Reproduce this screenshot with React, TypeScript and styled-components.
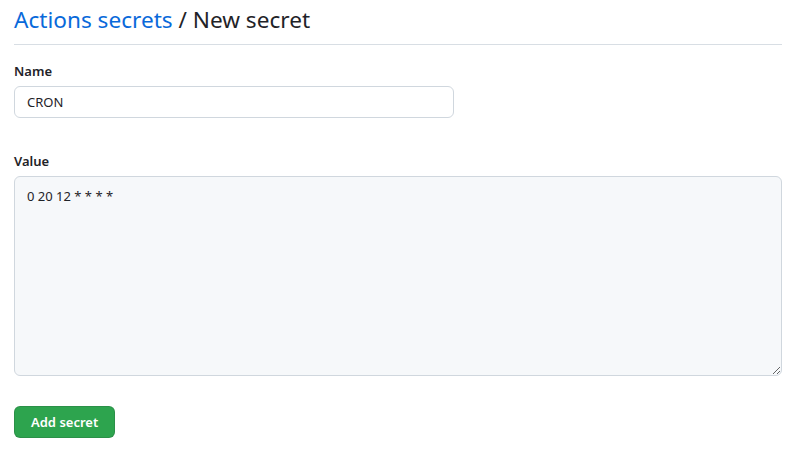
import styled, { createGlobalStyle } from "styled-components";

const GlobalStyle = createGlobalStyle`
  body {
    margin: 0;
    background: #ffffff;
    font-family: "Noto Sans", "Open Sans", sans-serif;
    color: #1f2328;
  }
`;

const Page = styled.div`
  width: 768px;
  padding: 0 14px;
`;

const Header = styled.h2`
  margin: 0;
  padding-top: 2px;
  padding-bottom: 6px;
  border-bottom: 1px solid #d8dee4;
  font-size: 22.6px;
  font-weight: 400;
  line-height: 36px;
  color: #1f2328;
`;

const Crumb = styled.a`
  color: #0969da;
  text-decoration: none;
`;

const Form = styled.form`
  display: flex;
  flex-direction: column;
  padding-top: 16px;
`;

const Field = styled.div<{ $gap?: number }>`
  display: flex;
  flex-direction: column;
  gap: 4px;
  margin-bottom: ${(p) => p.$gap ?? 0}px;
`;

const Label = styled.label`
  font-size: 13px;
  font-weight: 600;
  line-height: 21px;
  color: #1f2328;
`;

const baseField = `
  box-sizing: border-box;
  border: 1px solid #d0d7de;
  border-radius: 6px;
  font-family: "Noto Sans", "Open Sans", sans-serif;
  font-size: 13px;
  color: #1f2328;
  padding: 5px 12px;
  outline: none;
`;

const TextInput = styled.input`
  ${baseField}
  width: 440px;
  height: 32px;
  background: #ffffff;
`;

const TextArea = styled.textarea`
  ${baseField}
  width: 768px;
  height: 200px;
  padding: 9px 12px;
  line-height: 20px;
  background: #f6f8fa;
  resize: vertical;
`;

const Actions = styled.div`
  display: flex;
`;

const SubmitButton = styled.button`
  height: 32px;
  padding: 0 16px;
  border: 1px solid rgba(31, 35, 40, 0.15);
  border-radius: 6px;
  background: #2da44e;
  color: #ffffff;
  font-family: "Noto Sans", "Open Sans", sans-serif;
  font-size: 13px;
  font-weight: 600;
  cursor: pointer;
`;

export default function App() {
  return (
    <>
      <GlobalStyle />
      <Page>
        <Header>
          <Crumb href="#">Actions secrets</Crumb> / New secret
        </Header>
        <Form onSubmit={(e) => e.preventDefault()}>
          <Field $gap={33}>
            <Label htmlFor="secret-name">Name</Label>
            <TextInput id="secret-name" defaultValue="CRON" />
          </Field>
          <Field $gap={30}>
            <Label htmlFor="secret-value">Value</Label>
            <TextArea id="secret-value" defaultValue="0 20 12 * * * *" />
          </Field>
          <Actions>
            <SubmitButton type="submit">Add secret</SubmitButton>
          </Actions>
        </Form>
      </Page>
    </>
  );
}
